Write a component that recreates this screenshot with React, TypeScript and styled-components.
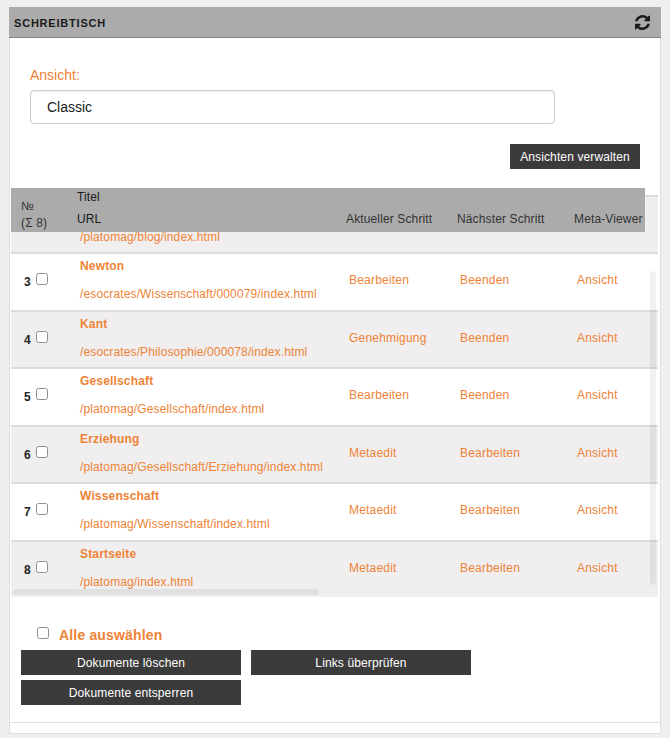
import React from "react";
import styled, { createGlobalStyle } from "styled-components";

const GlobalStyle = createGlobalStyle`
  * { box-sizing: border-box; }
  body {
    margin: 0;
    background: #f0eeef;
    font-family: "Liberation Sans", Arial, sans-serif;
    font-size: 12px;
    color: #333;
  }
`;

const Page = styled.main`
  height: 738px;
  padding: 7px 9px 4px;
  overflow: hidden;
`;

const Panel = styled.section`
  height: 727px;
  display: flex;
  flex-direction: column;
  background: #fff;
  border: 1px solid #dfdfdf;
  border-top: 0;
`;

const PanelHeader = styled.header`
  flex: none;
  display: flex;
  align-items: center;
  justify-content: space-between;
  height: 31px;
  margin: 0 -1px;
  padding: 0 11px 0 5px;
  background: #ababab;
  border-bottom: 1px solid #828282;
`;

const PanelTitle = styled.h1`
  margin: 0;
  font-size: 11px;
  line-height: 16px;
  letter-spacing: 0.8px;
  text-transform: uppercase;
  color: #1a1a1a;
  padding-top: 2px;
`;

const RefreshIcon = styled.svg`
  display: block;
  width: 15px;
  height: 15px;
  fill: #1a1a1a;
`;

const ViewForm = styled.div`
  flex: none;
  display: flex;
  flex-direction: column;
  height: 150px;
  padding: 27px 20px 0;
`;

const ViewLabel = styled.label`
  font-size: 14px;
  line-height: 20px;
  color: #ee8336;
`;

const ViewInput = styled.input`
  width: 525px;
  height: 34px;
  margin: 5px 0 20px;
  padding: 6px 16px;
  border: 1px solid #ccc;
  border-radius: 4px;
  box-shadow: inset 0 1px 1px rgba(0, 0, 0, 0.075);
  font: 14px "Liberation Sans", Arial, sans-serif;
  color: #1a1a1a;
`;

const Button = styled.button<{ $width: number }>`
  width: ${(p) => p.$width}px;
  height: 25px;
  padding: 1px 0 0;
  border: 0;
  background: #3b3b3b;
  color: #fff;
  font: 12px/24px "Liberation Sans", Arial, sans-serif;
  letter-spacing: 0.12px;
`;

const ManageRow = styled.div`
  display: flex;
  justify-content: flex-end;
`;

const TableViewport = styled.div`
  flex: none;
  position: relative;
  width: 647px;
  height: 409px;
  margin-left: 1px;
  padding-top: 6.5px;
  overflow: hidden;
  letter-spacing: 0.13px;
`;

const columns = "66px 269px 111px 117px 1fr";

const TableHead = styled.div`
  position: absolute;
  top: 0;
  left: 0;
  display: grid;
  grid-template-columns: ${columns};
  width: 634px;
  height: 44px;
  background: #ababab;
  white-space: nowrap;
`;

const NumberHead = styled.div`
  padding: 10px 0 0 10px;
  line-height: 17px;
`;

const TitleHead = styled.div`
  line-height: 22px;
  margin-top: -2px;
  color: #1a1a1a;
`;

const StepHead = styled.div`
  padding-top: 20px;
  line-height: 22px;
`;

const Row = styled.div<{ $shaded: boolean }>`
  display: grid;
  grid-template-columns: ${columns};
  height: 57.5px;
  border-top: 2px solid #dcdcdc;
  background: ${(p) => (p.$shaded ? "#f0eeef" : "#fff")};
  color: #ee8336;
  white-space: nowrap;
`;

const NumberCell = styled.div`
  display: flex;
  align-items: flex-start;
  padding: 19px 0 0 13px;
  font-weight: bold;
  color: #222;
`;

const RowNumber = styled.span`
  width: 12px;
  line-height: 17px;
  padding-top: 1px;
`;

const Checkbox = styled.input.attrs({ type: "checkbox" })`
  appearance: none;
  flex: none;
  width: 12px;
  height: 12px;
  margin: 0;
  border: 1px solid #8f8f8b;
  border-radius: 2.5px;
  background: #fff;
`;

const DocCell = styled.div`
  padding: 4px 0 0 3px;
`;

const DocTitle = styled.div`
  min-height: 16px;
  font-weight: bold;
  line-height: 16px;
  letter-spacing: 0.16px;
  margin-bottom: 12px;
`;

const DocUrl = styled.div`
  line-height: 16px;
`;

const StepCell = styled.div`
  padding: 18px 0 0 3px;
  line-height: 16px;
  letter-spacing: 0.2px;
`;

const VerticalThumb = styled.div`
  position: absolute;
  top: 83px;
  right: 2px;
  width: 6px;
  height: 314px;
  border-radius: 3px;
  background: rgba(0, 0, 0, 0.06);
`;

const HorizontalThumb = styled.div`
  position: absolute;
  left: 2px;
  bottom: 2px;
  width: 306px;
  height: 6px;
  border-radius: 3px;
  background: rgba(0, 0, 0, 0.06);
`;

const Actions = styled.div`
  flex: none;
  height: 126px;
  padding: 30px 11px 0;
  border-bottom: 1px solid #dfdfdf;
`;

const SelectAll = styled.label`
  display: flex;
  gap: 10px;
  height: 23px;
  padding-left: 16px;
  font-size: 14px;
  font-weight: bold;
  line-height: 16px;
  letter-spacing: 0.17px;
  color: #ee8336;
`;

const ButtonGrid = styled.div`
  display: grid;
  grid-template-columns: 220px 220px;
  gap: 5px 10px;
`;

const documents = [
  { no: 2, url: "/platomag/blog/index.html" },
  { no: 3, title: "Newton", url: "/esocrates/Wissenschaft/000079/index.html", current: "Bearbeiten", next: "Beenden", viewer: "Ansicht" },
  { no: 4, title: "Kant", url: "/esocrates/Philosophie/000078/index.html", current: "Genehmigung", next: "Beenden", viewer: "Ansicht" },
  { no: 5, title: "Gesellschaft", url: "/platomag/Gesellschaft/index.html", current: "Bearbeiten", next: "Beenden", viewer: "Ansicht" },
  { no: 6, title: "Erziehung", url: "/platomag/Gesellschaft/Erziehung/index.html", current: "Metaedit", next: "Bearbeiten", viewer: "Ansicht" },
  { no: 7, title: "Wissenschaft", url: "/platomag/Wissenschaft/index.html", current: "Metaedit", next: "Bearbeiten", viewer: "Ansicht" },
  { no: 8, title: "Startseite", url: "/platomag/index.html", current: "Metaedit", next: "Bearbeiten", viewer: "Ansicht" },
];

export default function App() {
  return (
    <Page>
      <GlobalStyle />
      <Panel>
        <PanelHeader>
          <PanelTitle>Schreibtisch</PanelTitle>
          <RefreshIcon viewBox="0 0 1536 1536" aria-hidden="true">
            <path d="M1511 928q0 5-1 7-64 268-268 434.500T764 1536q-146 0-282.500-55T238 1324l-129 129q-19 19-45 19t-45-19-19-45V960q0-26 19-45t45-19h448q26 0 45 19t19 45-19 45l-137 137q71 66 161 102t187 36q134 0 250-65t186-179q11-17 53-117 8-23 30-23h192q13 0 22.500 9.500t9.500 22.500zm25-800v448q0 26-19 45t-45 19h-448q-26 0-45-19t-19-45 19-45l138-138Q969 256 768 256q-134 0-250 65T332 500q-11 17-53 117-8 23-30 23H50q-13 0-22.500-9.500T18 608v-7q65-268 270-434.500T768 0q146 0 284 55.500T1297 212l130-129q19-19 45-19t45 19 19 45z" />
          </RefreshIcon>
        </PanelHeader>
        <ViewForm>
          <ViewLabel htmlFor="view">Ansicht:</ViewLabel>
          <ViewInput id="view" defaultValue="Classic" />
          <ManageRow>
            <Button $width={130}>Ansichten verwalten</Button>
          </ManageRow>
        </ViewForm>
        <TableViewport>
          {documents.map((d) => (
            <Row key={d.no} $shaded={d.no % 2 === 0}>
              <NumberCell>
                {d.title && (
                  <>
                    <RowNumber>{d.no}</RowNumber>
                    <Checkbox />
                  </>
                )}
              </NumberCell>
              <DocCell>
                <DocTitle>{d.title}</DocTitle>
                <DocUrl>{d.url}</DocUrl>
              </DocCell>
              <StepCell>{d.current}</StepCell>
              <StepCell>{d.next}</StepCell>
              <StepCell>{d.viewer}</StepCell>
            </Row>
          ))}
          <TableHead>
            <NumberHead>
              №<br />(Σ 8)
            </NumberHead>
            <TitleHead>
              Titel<br />URL
            </TitleHead>
            <StepHead>Aktueller Schritt</StepHead>
            <StepHead>Nächster Schritt</StepHead>
            <StepHead>Meta-Viewer</StepHead>
          </TableHead>
          <VerticalThumb />
          <HorizontalThumb />
        </TableViewport>
        <Actions>
          <SelectAll>
            <Checkbox />
            Alle auswählen
          </SelectAll>
          <ButtonGrid>
            <Button $width={220}>Dokumente löschen</Button>
            <Button $width={220}>Links überprüfen</Button>
            <Button $width={220}>Dokumente entsperren</Button>
          </ButtonGrid>
        </Actions>
      </Panel>
    </Page>
  );
}
